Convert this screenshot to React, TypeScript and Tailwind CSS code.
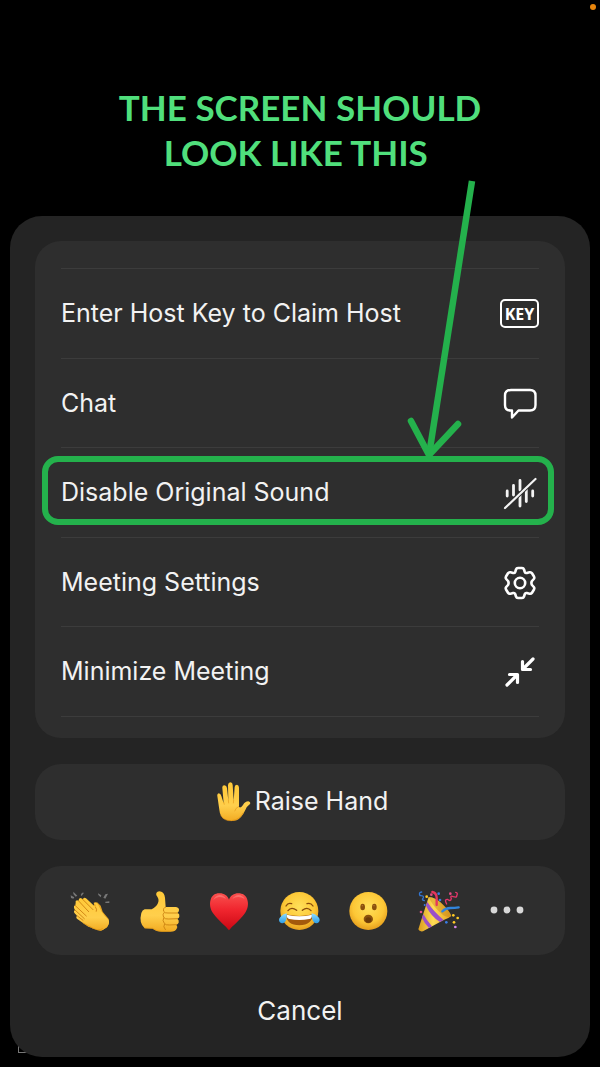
import type { ReactNode } from 'react';

const ChatIcon = () => (
  <svg viewBox="0 0 34 31" className="w-[34px] h-[31px]" fill="none" stroke="#fff" strokeWidth="2.4" strokeLinejoin="round">
    <path d="M8 2H27Q32.500 2 32.500 7.500V17Q32.500 22.500 27 22.500H15.500L9 29.500V22.500H7.500Q2 22.500 2 17V7.500Q2 2 8 2Z" />
  </svg>
);

const SoundOffIcon = () => (
  <svg viewBox="0 0 34 34" className="w-[34px] h-[34px]" fill="none" stroke="#f4f4f4" strokeLinecap="round">
    <path strokeWidth="2.800" d="M4.200 15V20M10.500 9.500V19M17 4.500V14M17 19V30M23.300 13V25.500M29.700 15V20" />
    <path stroke="#2e2e2e" strokeWidth="4" strokeLinecap="butt" d="M2 32L32.500 3" />
    <path strokeWidth="2.200" d="M2 32L32.500 3" />
  </svg>
);

const GearIcon = () => (
  <svg viewBox="0 0 32 34" className="w-[32px] h-[34px]" fill="none" stroke="#fff" strokeWidth="2.600" strokeLinejoin="round">
    <path d="M14 2H18Q19.500 2 20 3.500L20.800 6Q21.300 7.300 22.800 7L25.500 6.300Q27.200 6 28 7.300L30 10.500Q30.700 11.800 29.800 13L28 15Q26.800 17 28 19L29.800 21Q30.700 22.200 30 23.500L28 26.700Q27.200 28 25.500 27.700L22.800 27Q21.300 26.700 20.800 28L20 30.500Q19.500 32 18 32H14Q12.500 32 12 30.500L11.200 28Q10.700 26.700 9.200 27L6.500 27.700Q4.800 28 4 26.700L2 23.500Q1.300 22.200 2.200 21L4 19Q5.200 17 4 15L2.200 13Q1.300 11.800 2 10.500L4 7.300Q4.800 6 6.500 6.300L9.200 7Q10.700 7.300 11.200 6L12 3.500Q12.500 2 14 2Z" />
    <circle cx="16" cy="17" r="5.200" />
  </svg>
);

const MinimizeIcon = () => (
  <svg viewBox="0 0 30 30" className="w-[30px] h-[30px]" fill="none" stroke="#fff" strokeWidth="3.200" strokeLinecap="round" strokeLinejoin="round">
    <path d="M28 2L18.500 11.500M17.500 4.500V12.500H25.500M2 28L11.500 18.500M4.500 17.500H12.500V25.500" />
  </svg>
);

const KeyIcon = () => (
  <span className="flex h-[29px] w-[39px] shrink-0 items-center justify-center rounded-[5px] border-2 border-white font-['Noto_Sans',sans-serif] text-[16px] font-bold leading-none text-white">
    KEY
  </span>
);

const Emoji = ({ children }: { children: ReactNode }) => (
  <svg viewBox="0 0 120 120" className="h-10 w-10 overflow-visible">
    {children}
  </svg>
);

const Hand = () => (
  <svg viewBox="0 0 105 120" className="h-10 w-[35px]">
    <path
      fill="url(#skin)"
      d="M4 42Q3 35 8 34Q14 34 16 42L23 64L19 18Q18 10 25 10Q32 10 33 18L37 56L36 9Q37 1 43 1Q50 2 50 9L53 56L56 15Q57 8 63 8Q69 9 69 17L69 75Q75 79 81 69Q87 58 97 58Q105 60 102 66Q93 72 88 84Q77 108 62 115Q41 121 24 111Q12 103 10 83Z"
    />
    <path fill="none" stroke="#e79a19" strokeWidth="2" d="M23 60L25 68M37 53L38 64M53 54L52 64M69 73Q58 78 56 88" />
    <path fill="none" stroke="#d98a12" strokeWidth="3" opacity=".6" d="M14 100Q26 118 47 116Q70 114 82 92" />
  </svg>
);

const Clap = () => (
  <Emoji>
    <path fill="#777" d="M2 13L13 19L10 23L3 21ZM10 2L22 14L17 17L10 9ZM42 5L35 15L32 12L36 5ZM84 7L94 13L92 19L85 12ZM114 8L106 23L100 20L106 10ZM118 31V36L106 36L106 32Z" />
    <path fill="#e9a51d" d="M72 36Q80 31 86 38L92 44L98 62L116 84Q120 98 110 110L92 119L66 112Z" />
    <path
      fill="url(#skin)"
      d="M17 35Q15 29 21 28L26 29Q25 22 32 21L39 25Q41 18 48 22L77 49Q79 39 70 36Q79 31 85 42L95 62Q103 74 114 85Q121 94 113 105L100 116Q89 122 77 115L55 107L23 85Q16 80 21 74L14 67Q9 61 15 57L12 51Q10 44 16 43Z"
    />
    <path fill="none" stroke="#c97a0c" strokeWidth="2.500" strokeLinecap="round" d="M26 30L56 62M38 25L69 56M15 43L49 75M15 57L43 83M21 74L39 88M77 49Q82 55 79 61" />
    <path fill="none" stroke="#dc9211" strokeWidth="3" opacity=".7" d="M39 96L66 110Q84 121 98 113" />
  </Emoji>
);

const ThumbUp = () => (
  <Emoji>
    <path
      fill="url(#skin)"
      d="M49 6Q53 -1 64 2Q73 5 75 20L77 48H108Q118 50 117 58Q117 62 113 65Q120 69 118 77Q117 81 112 83Q118 87 116 95Q114 100 109 101Q114 107 110 113Q106 122 92 122H65Q49 122 38 113L14 112Q-4 96 4 66Q7 57 14 55L35 55Q49 48 54 36Q58 25 52 17Q47 12 49 6Z"
    />
    <path fill="none" stroke="#c87d0d" strokeWidth="2.500" strokeLinecap="round" d="M77 48Q68 51 71 61Q74 67 84 66H113M72 65Q66 71 71 79Q75 85 86 84L112 83M71 81Q66 89 73 97Q77 103 88 102L109 101M73 100Q68 107 76 116" />
    <path fill="none" stroke="#db9110" strokeWidth="3" opacity=".6" d="M14 111L38 112Q48 120 65 121H92" />
  </Emoji>
);

const Heart = () => (
  <Emoji>
    <path
      fill="url(#heart)"
      d="M60 118C51 105 27 88 14 69C3 55 1 38 5 26C9 12 21 6 32 7C45 7 56 14 60 26C64 14 75 7 88 7C101 7 111 13 115 26C119 39 117 54 106 69C93 88 69 105 60 118Z"
    />
    <path fill="#ff8d87" opacity=".55" d="M13 27Q19 13 32 12Q46 13 51 24Q41 17 30 18Q19 19 13 27ZM70 24Q77 13 89 12Q101 13 107 24Q98 18 88 18Q77 18 70 24Z" />
  </Emoji>
);

const Joy = () => (
  <Emoji>
    <circle cx="61" cy="60" r="57" fill="url(#face)" />
    <g fill="none" stroke="#8a4b0b" strokeWidth="4" strokeLinecap="round">
      <path d="M21 45Q27 34 38 38M84 38Q95 34 102 45M27 59Q37 46 53 58M70 58Q85 46 96 59" />
    </g>
    <path fill="#a3590c" d="M21 70Q61 80 101 70Q101 102 61 103Q22 103 21 70Z" />
    <path fill="#fff" d="M23 71Q61 81 99 71Q99 83 91 84Q61 90 31 84Q23 82 23 71Z" />
    <g fill="url(#tear)">
      <path d="M23 67Q25 85 17 94Q9 100 2 93Q-3 84 5 77Q11 70 23 67Z" />
      <path d="M98 67Q97 85 105 94Q113 100 120 93Q125 84 117 77Q110 70 98 67Z" />
    </g>
  </Emoji>
);

const Wow = () => (
  <Emoji>
    <circle cx="61" cy="60" r="57" fill="url(#face)" />
    <g fill="#8b510d">
      <ellipse cx="44" cy="48" rx="7" ry="10" />
      <ellipse cx="79" cy="48" rx="7" ry="10" />
      <ellipse cx="61" cy="84" rx="14" ry="13" />
    </g>
    <ellipse cx="61" cy="87" rx="9" ry="8" fill="#6c3b08" />
    <g fill="#b77b32">
      <circle cx="43" cy="44" r="2" />
      <circle cx="78" cy="44" r="2" />
    </g>
  </Emoji>
);

const Party = () => (
  <Emoji>
    <path fill="url(#cone)" d="M32 18Q49 17 72 38Q96 61 100 75Q92 82 77 87L15 121Q4 123 1 115Z" />
    <path fill="#9b50c9" d="M24 44L28 33Q47 62 77 87L66 93Q38 75 24 44ZM12 80L16 69Q26 88 42 106L33 111Q19 97 12 80Z" />
    <path fill="#b77510" opacity=".35" d="M32 18Q42 44 76 73Q91 82 100 75Q89 51 66 33Q46 17 32 18Z" />
    <g fill="none" strokeLinecap="round">
      <path stroke="#e6365d" strokeWidth="7" d="M43 3Q55 5 56 20V42" />
      <path stroke="#3184dc" strokeWidth="7" d="M73 61Q83 51 97 51T122 49" />
      <path stroke="#e6366a" strokeWidth="4" d="M86 39Q78 24 88 25Q98 33 100 23Q95 12 106 17Q117 20 116 15Q121 5 113 4" />
      <path stroke="#3376d2" strokeWidth="4" d="M11 3Q1 4 6 14Q18 13 16 20Q9 27 19 29" />
    </g>
    <g fill="#ffcb25">
      <circle cx="26" cy="17" r="4" />
      <circle cx="106" cy="73" r="4" />
      <circle cx="108" cy="94" r="4" />
      <circle cx="119" cy="81" r="4" />
    </g>
    <g fill="#397ce5">
      <circle cx="62" cy="8" r="4" />
      <circle cx="66" cy="27" r="4" />
      <circle cx="85" cy="94" r="4" />
      <circle cx="20" cy="42" r="3" />
    </g>
    <g fill="#e44c83">
      <circle cx="97" cy="8" r="4" />
      <circle cx="9" cy="63" r="4" />
      <circle cx="40" cy="11" r="4" />
    </g>
    <circle cx="112" cy="108" r="4" fill="#d487ec" />
  </Emoji>
);

const More = () => (
  <svg viewBox="0 0 40 40" className="h-10 w-10" fill="#d8d8d8">
    <circle cx="7" cy="19" r="3.400" />
    <circle cx="20" cy="19" r="3.400" />
    <circle cx="33" cy="19" r="3.400" />
  </svg>
);

// Shared gradients for the reaction drawings
const Gradients = () => (
  <svg className="absolute h-0 w-0" aria-hidden="true">
    <defs>
      <linearGradient id="skin" x1="0" y1="0" x2="0" y2="1">
        <stop offset="0" stopColor="#ffc938" />
        <stop offset=".6" stopColor="#ffcf4c" />
        <stop offset="1" stopColor="#f2ab22" />
      </linearGradient>
      <linearGradient id="heart" x1="0" y1="0" x2="0" y2="1">
        <stop offset="0" stopColor="#f9504e" />
        <stop offset=".45" stopColor="#f0252e" />
        <stop offset="1" stopColor="#cb0713" />
      </linearGradient>
      <radialGradient id="face" cx=".5" cy=".4" r=".62">
        <stop offset="0" stopColor="#ffe05a" />
        <stop offset=".65" stopColor="#fdc736" />
        <stop offset="1" stopColor="#e39a1b" />
      </radialGradient>
      <linearGradient id="tear" x1="0" y1="0" x2="0" y2="1">
        <stop offset="0" stopColor="#8edcff" />
        <stop offset="1" stopColor="#2c9ee8" />
      </linearGradient>
      <linearGradient id="cone" x1="0" y1="0" x2="1" y2="0">
        <stop offset="0" stopColor="#d99b1e" />
        <stop offset=".45" stopColor="#ffdc55" />
        <stop offset="1" stopColor="#e5a322" />
      </linearGradient>
    </defs>
  </svg>
);

const menuItems = [
  { label: 'Enter Host Key to Claim Host', icon: KeyIcon },
  { label: 'Chat', icon: ChatIcon },
  { label: 'Disable Original Sound', icon: SoundOffIcon, highlighted: true },
  { label: 'Meeting Settings', icon: GearIcon },
  { label: 'Minimize Meeting', icon: MinimizeIcon },
];

const reactions = [
  { name: 'Clap', icon: Clap },
  { name: 'Thumbs up', icon: ThumbUp },
  { name: 'Heart', icon: Heart },
  { name: 'Joy', icon: Joy },
  { name: 'Open mouth', icon: Wow },
  { name: 'Tada', icon: Party },
  { name: 'More reactions', icon: More },
];

// Green frame around a row, with an arrow coming down to it
function Highlight() {
  return (
    <>
      <span className="pointer-events-none absolute -left-[19px] -right-[15px] top-2 bottom-3 rounded-2xl border-6 border-[#24b14c]" />
      <svg viewBox="0 0 80 284" className="pointer-events-none absolute right-[60px] bottom-[76px] h-[284px] w-[80px]" fill="none" stroke="#24b14c">
        <path d="M73 4L30 278" strokeWidth="6.500" />
        <path d="M12 244L30 278L59 247" strokeWidth="6.500" strokeLinecap="round" strokeLinejoin="round" />
      </svg>
    </>
  );
}

export default function App() {
  return (
    <main className="relative min-h-screen bg-black px-[10px] pt-[85px] pb-[10px] font-[Inter,sans-serif] text-[#f2f2f2]">
      <Gradients />
      <span className="absolute top-1 right-1 h-[6px] w-[6px] rounded-full bg-[#e8850c]" />
      <span className="absolute bottom-[14px] left-[18px] h-[9px] w-[9px] border border-[#777]" />

      <h1 className="text-center font-[Lato,sans-serif] text-[35px] font-bold leading-[45px] text-[#50df7c]">
        THE SCREEN SHOULD
        <br />
        LOOK LIKE THIS&nbsp;
      </h1>

      <section className="relative mt-[41px] rounded-[32px] bg-[#242424] px-[25px] pt-[25px] text-[25px]">
        <div className="rounded-[26px] bg-[#2e2e2e] px-[26px] pt-[27px] pb-[21px]">
          <ul className="grid h-[449px] grid-rows-5 border-t border-[#3c3c3c]">
            {menuItems.map(({ label, icon: Icon, highlighted }) => (
              <li key={label} className="relative border-b border-[#3c3c3c]">
                <button className="flex h-full w-full items-center justify-between pt-px text-left">
                  <span>{label}</span>
                  <span className="flex w-[39px] justify-center">
                    <Icon />
                  </span>
                </button>
                {highlighted && <Highlight />}
              </li>
            ))}
          </ul>
        </div>

        <button className="mt-[26px] flex h-[76px] w-full items-center justify-center gap-1 rounded-[26px] bg-[#2e2e2e] pl-1">
          <Hand />
          Raise Hand
        </button>

        <div className="mt-[26px] flex h-[89px] items-center justify-between rounded-[26px] bg-[#2e2e2e] pr-[38px] pl-[35px]">
          {reactions.map(({ name, icon: Icon }) => (
            <button key={name} aria-label={name}>
              <Icon />
            </button>
          ))}
        </div>

        <button className="mt-2 h-[94px] w-full text-[26px]">Cancel</button>
      </section>
    </main>
  );
}
